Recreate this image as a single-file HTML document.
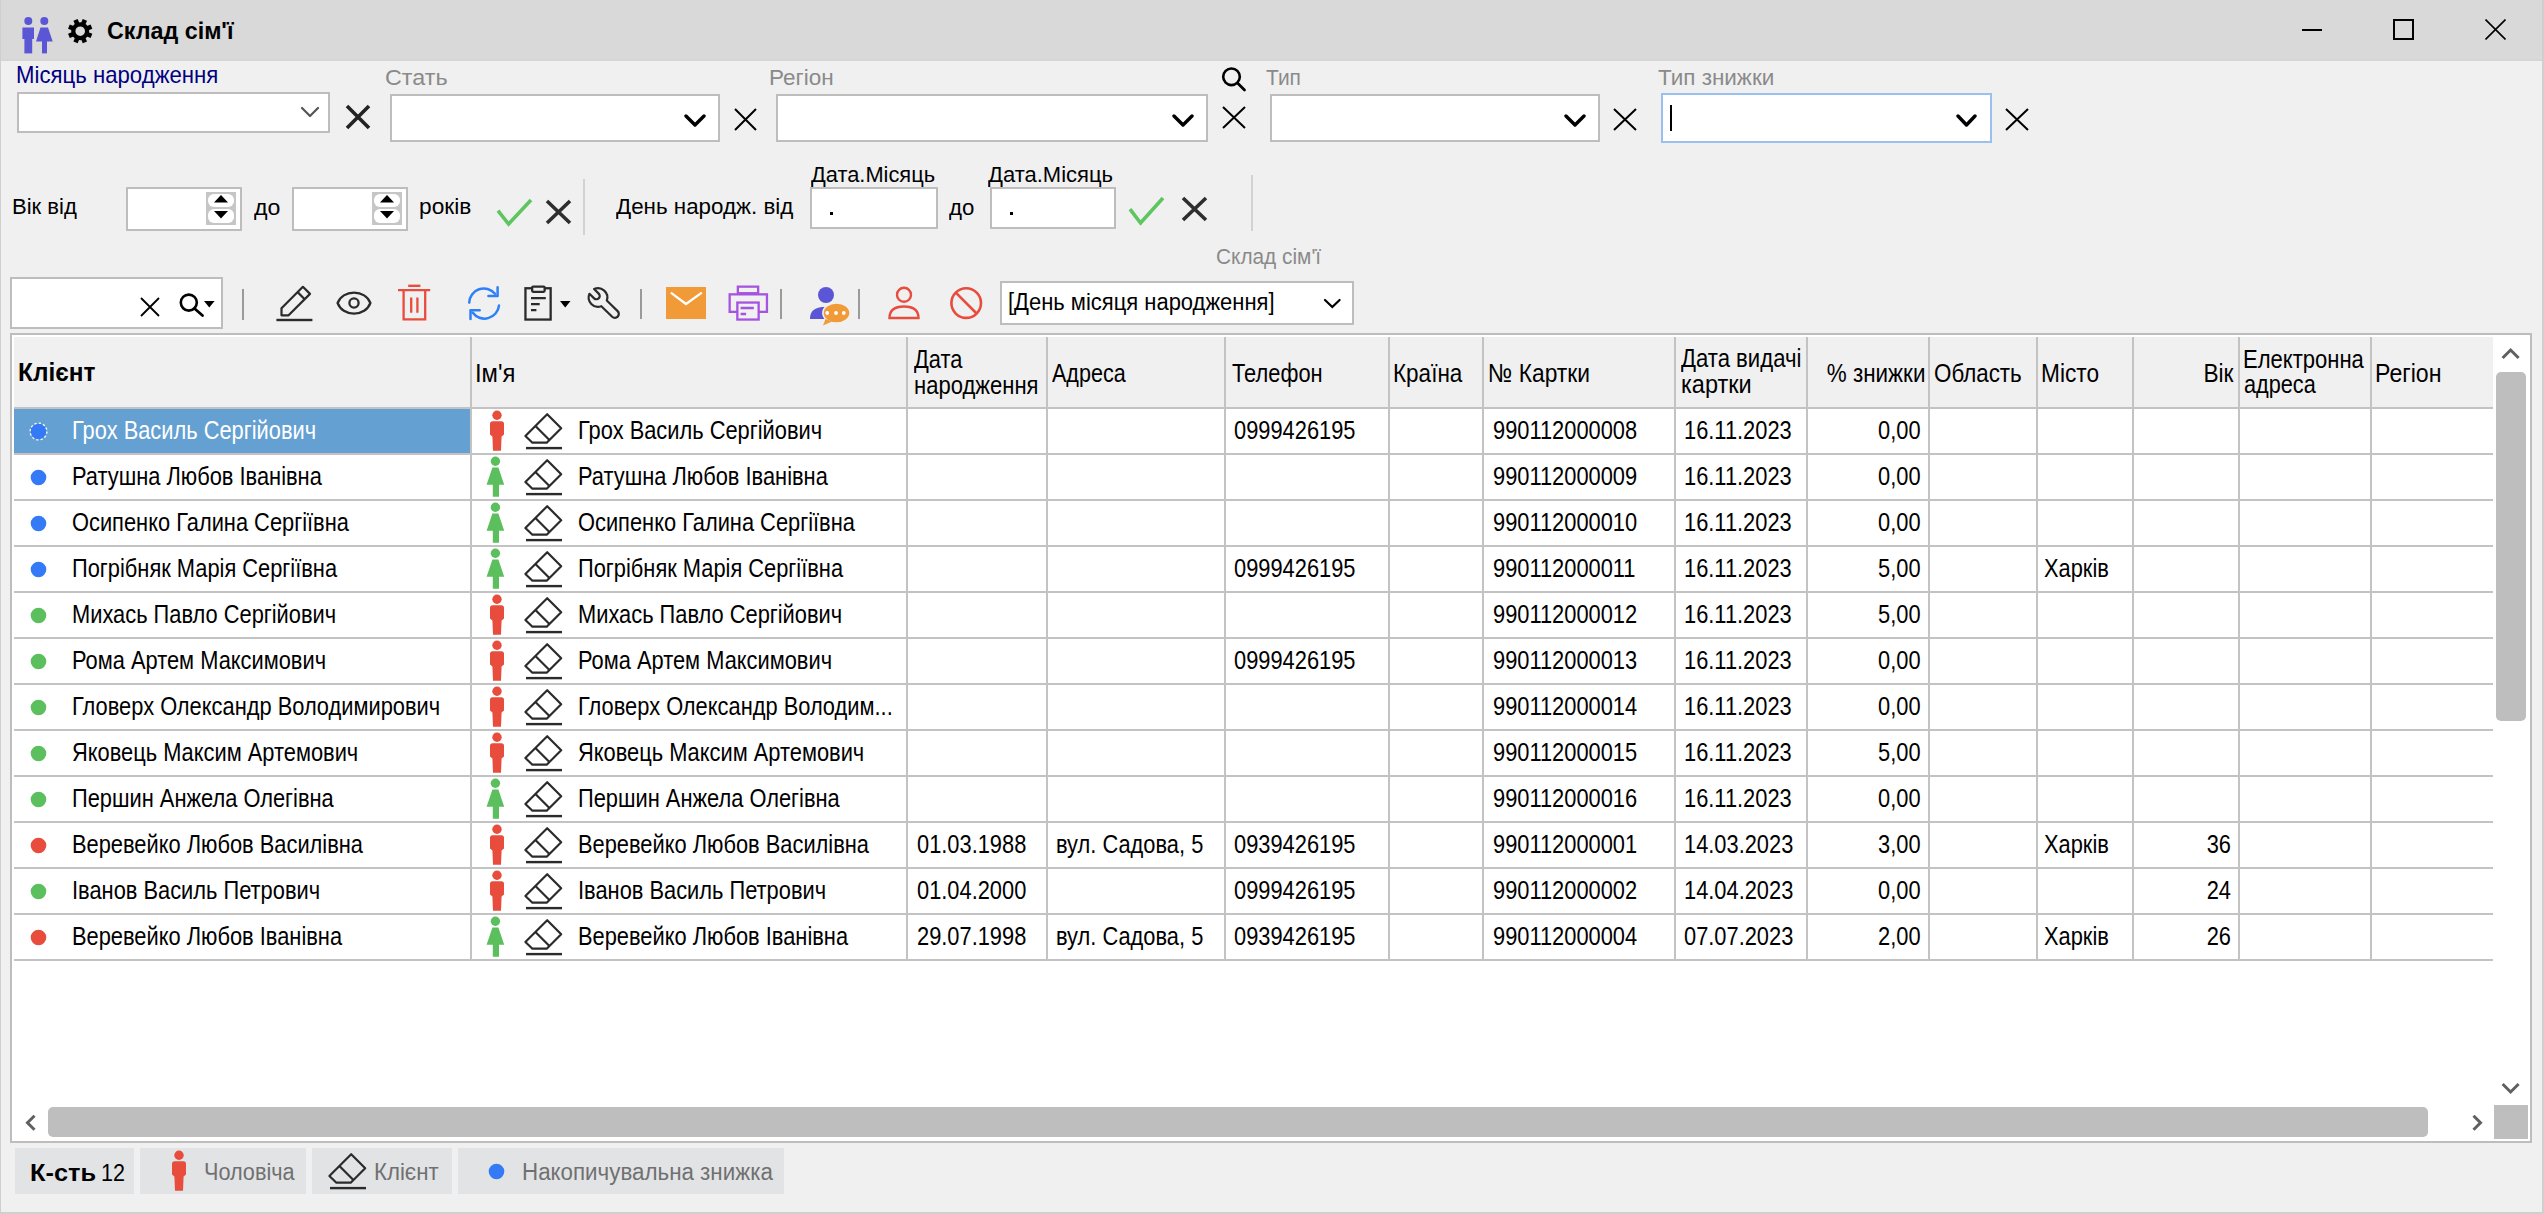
<!DOCTYPE html>
<html><head><meta charset="utf-8"><title>Склад сім'ї</title>
<style>
html,body{margin:0;padding:0;}
body{width:2544px;height:1214px;position:relative;overflow:hidden;background:#f0f0f0;font-family:"Liberation Sans",sans-serif;}
.a{position:absolute;display:block;}
.t{position:absolute;white-space:nowrap;line-height:1;transform-origin:0 0;}
</style></head><body>
<div class="a" style="left:0px;top:0px;width:2544px;height:61px;background:#d9d9d9"></div>
<div class="a" style="left:0px;top:59px;width:2544px;height:2px;background:#d5d5d5"></div>
<div class="a" style="left:0px;top:0px;width:1px;height:1214px;background:#cfcfcf"></div>
<div class="a" style="left:2542px;top:0px;width:2px;height:1214px;background:#cfcfcf"></div>
<div class="a" style="left:0px;top:1212px;width:2544px;height:2px;background:#cfcfcf"></div>
<svg class="a" style="left:20px;top:14px;" width="36" height="42" viewBox="0 0 36 42"><g fill="#5a56d6">
<circle cx="8.3" cy="7" r="4"/>
<rect x="2.4" y="13.5" width="11.6" height="11.5"/>
<rect x="4.4" y="24" width="7.8" height="15.4"/>
<circle cx="24.3" cy="7" r="4"/>
<path d="M20.5 13.5 H28 L32.7 27.5 H16 Z"/>
<rect x="22" y="26" width="5" height="13.4"/>
</g></svg>
<svg class="a" style="left:68px;top:19px;" width="25" height="25" viewBox="0 0 25 25"><g transform="translate(12.2,12.2)" fill="#000"><rect x="-2.3" y="-12.2" width="4.6" height="6" transform="rotate(22.5)"/><rect x="-2.3" y="-12.2" width="4.6" height="6" transform="rotate(67.5)"/><rect x="-2.3" y="-12.2" width="4.6" height="6" transform="rotate(112.5)"/><rect x="-2.3" y="-12.2" width="4.6" height="6" transform="rotate(157.5)"/><rect x="-2.3" y="-12.2" width="4.6" height="6" transform="rotate(202.5)"/><rect x="-2.3" y="-12.2" width="4.6" height="6" transform="rotate(247.5)"/><rect x="-2.3" y="-12.2" width="4.6" height="6" transform="rotate(292.5)"/><rect x="-2.3" y="-12.2" width="4.6" height="6" transform="rotate(337.5)"/><path d="M0 -9 A9 9 0 1 1 0 9 A9 9 0 1 1 0 -9 Z M0 -4.8 A4.8 4.8 0 1 0 0 4.8 A4.8 4.8 0 1 0 0 -4.8 Z" fill-rule="evenodd"/></g></svg>
<div id="title" class="t" style="left:107.20px;top:18.88px;font-size:24px;color:#000;font-weight:bold;transform:scaleX(0.9700)">Склад сім'ї</div>
<div class="a" style="left:2302px;top:29px;width:20px;height:2px;background:#000"></div>
<div class="a" style="left:2393px;top:19px;width:21px;height:21px;border:2px solid #000;box-sizing:border-box"></div>
<svg class="a" style="left:2485px;top:19px;" width="21" height="21" viewBox="0 0 21 21"><path d="M0.5 0.5 L20.5 20.5 M20.5 0.5 L0.5 20.5" stroke="#000" stroke-width="1.6"/></svg>
<div id="lbl_month" class="t" style="left:15.93px;top:62.78px;font-size:24px;color:#000080;transform:scaleX(0.9242)">Місяць народження</div>
<div id="lbl_sex" class="t" style="left:384.83px;top:66.98px;font-size:22px;color:#8a8a8a;transform:scaleX(1.0607)">Стать</div>
<div id="lbl_reg" class="t" style="left:769.04px;top:66.98px;font-size:22px;color:#8a8a8a;transform:scaleX(1.0234)">Регіон</div>
<div id="lbl_type" class="t" style="left:1265.82px;top:66.98px;font-size:22px;color:#8a8a8a;transform:scaleX(0.9528)">Тип</div>
<div id="lbl_dtype" class="t" style="left:1658.00px;top:66.98px;font-size:22px;color:#8a8a8a;transform:scaleX(1.0202)">Тип знижки</div>
<div class="a" style="left:17px;top:92px;width:313px;height:41px;background:#fff;border:2px solid #bdbdbd;box-sizing:border-box"></div>
<svg class="a" style="left:300px;top:106px;" width="20" height="13" viewBox="0 0 20 13"><path d="M2 2 L10 10 L18 2" fill="none" stroke="#555" stroke-width="2.2" stroke-linecap="round" stroke-linejoin="round"/></svg>
<svg class="a" style="left:345px;top:104px;" width="26" height="26" viewBox="0 0 26 26"><path d="M2 2 L24 24 M24 2 L2 24" stroke="#222" stroke-width="3.6" stroke-linecap="butt"/></svg>
<div class="a" style="left:390px;top:94px;width:330px;height:48px;background:#fff;border:2px solid #bdbdbd;box-sizing:border-box"></div>
<svg class="a" style="left:684px;top:114px;" width="22" height="14" viewBox="0 0 22 14"><path d="M2 2 L11 11 L20 2" fill="none" stroke="#000" stroke-width="3.4" stroke-linecap="round" stroke-linejoin="round"/></svg>
<svg class="a" style="left:733px;top:107px;" width="25" height="25" viewBox="0 0 25 25"><path d="M2 2 L23 23 M23 2 L2 23" stroke="#000" stroke-width="2" stroke-linecap="butt"/></svg>
<div class="a" style="left:776px;top:94px;width:432px;height:48px;background:#fff;border:2px solid #bdbdbd;box-sizing:border-box"></div>
<svg class="a" style="left:1172px;top:114px;" width="22" height="14" viewBox="0 0 22 14"><path d="M2 2 L11 11 L20 2" fill="none" stroke="#000" stroke-width="3.4" stroke-linecap="round" stroke-linejoin="round"/></svg>
<svg class="a" style="left:1220.5px;top:105px;" width="26" height="25" viewBox="0 0 26 25"><path d="M2 2 L24 23 M24 2 L2 23" stroke="#000" stroke-width="2" stroke-linecap="butt"/></svg>
<div class="a" style="left:1270px;top:94px;width:330px;height:48px;background:#fff;border:2px solid #bdbdbd;box-sizing:border-box"></div>
<svg class="a" style="left:1564px;top:114px;" width="22" height="14" viewBox="0 0 22 14"><path d="M2 2 L11 11 L20 2" fill="none" stroke="#000" stroke-width="3.4" stroke-linecap="round" stroke-linejoin="round"/></svg>
<svg class="a" style="left:1612px;top:107px;" width="26" height="25" viewBox="0 0 26 25"><path d="M2 2 L24 23 M24 2 L2 23" stroke="#000" stroke-width="2" stroke-linecap="butt"/></svg>
<div class="a" style="left:1661px;top:93px;width:331px;height:50px;background:#fff;border:2px solid #99c1ef;box-sizing:border-box"></div>
<svg class="a" style="left:1956px;top:114px;" width="21" height="14" viewBox="0 0 21 14"><path d="M2 2 L10.5 11 L19 2" fill="none" stroke="#000" stroke-width="3.4" stroke-linecap="round" stroke-linejoin="round"/></svg>
<div class="a" style="left:1670px;top:105px;width:2px;height:26px;background:#000"></div>
<svg class="a" style="left:2004px;top:107px;" width="26" height="25" viewBox="0 0 26 25"><path d="M2 2 L24 23 M24 2 L2 23" stroke="#000" stroke-width="2" stroke-linecap="butt"/></svg>
<svg class="a" style="left:1220px;top:65px;" width="28" height="28" viewBox="0 0 28 28"><circle cx="11.5" cy="11.8" r="8.3" fill="none" stroke="#000" stroke-width="2.6"/><path d="M17.5 18 L24.5 25" stroke="#000" stroke-width="2.8" stroke-linecap="round"/></svg>
<div id="lbl_age" class="t" style="left:11.52px;top:196.18px;font-size:22px;color:#000;transform:scaleX(1.0020)">Вік від</div>
<div class="a" style="left:126px;top:187px;width:116px;height:44px;background:#fff;border:2px solid #bdbdbd;box-sizing:border-box"></div>
<div class="a" style="left:206px;top:191.5px;width:30px;height:33px;background:#c6c6c6"></div>
<div class="a" style="left:208px;top:193.5px;width:26px;height:13.5px;background:#fff;border-radius:6px"></div>
<div class="a" style="left:208px;top:208.5px;width:26px;height:14px;background:#fff;border-radius:6px"></div>
<svg class="a" style="left:213px;top:194px;" width="16" height="10" viewBox="0 0 16 10"><path d="M1 8.5 L8 1 L15 8.5 Z" fill="#000"/></svg>
<svg class="a" style="left:213px;top:210px;" width="16" height="10" viewBox="0 0 16 10"><path d="M1 1 L8 8.5 L15 1 Z" fill="#000"/></svg>
<div id="lbl_do1" class="t" style="left:253.99px;top:196.78px;font-size:22px;color:#000;transform:scaleX(1.0518)">до</div>
<div class="a" style="left:292px;top:187px;width:116px;height:44px;background:#fff;border:2px solid #bdbdbd;box-sizing:border-box"></div>
<div class="a" style="left:372px;top:191.5px;width:30px;height:33px;background:#c6c6c6"></div>
<div class="a" style="left:374px;top:193.5px;width:26px;height:13.5px;background:#fff;border-radius:6px"></div>
<div class="a" style="left:374px;top:208.5px;width:26px;height:14px;background:#fff;border-radius:6px"></div>
<svg class="a" style="left:379px;top:194px;" width="16" height="10" viewBox="0 0 16 10"><path d="M1 8.5 L8 1 L15 8.5 Z" fill="#000"/></svg>
<svg class="a" style="left:379px;top:210px;" width="16" height="10" viewBox="0 0 16 10"><path d="M1 1 L8 8.5 L15 1 Z" fill="#000"/></svg>
<div id="lbl_years" class="t" style="left:419.11px;top:196.18px;font-size:22px;color:#000;transform:scaleX(1.0321)">років</div>
<svg class="a" style="left:495px;top:197px;" width="39" height="30" viewBox="0 0 39 30"><path d="M3 13.7 L13.55 27 L36 3" fill="none" stroke="#5ec65e" stroke-width="3.6" stroke-linejoin="miter"/></svg>
<svg class="a" style="left:544.5px;top:198.5px;" width="27" height="26" viewBox="0 0 27 26"><path d="M2 2 L25 24 M25 2 L2 24" stroke="#2e2e2e" stroke-width="3.6" stroke-linecap="butt"/></svg>
<div class="a" style="left:583px;top:179px;width:2px;height:56px;background:#d2d2d2"></div>
<div id="lbl_bday" class="t" style="left:615.78px;top:196.48px;font-size:22px;color:#000;transform:scaleX(1.0167)">День народж. від</div>
<div id="lbl_dm1" class="t" style="left:810.79px;top:163.98px;font-size:22px;color:#000;transform:scaleX(0.9923)">Дата.Місяць</div>
<div class="a" style="left:810px;top:187px;width:128px;height:42px;background:#fff;border:2px solid #bdbdbd;box-sizing:border-box"></div>
<div class="a" style="left:829.5px;top:212px;width:3px;height:3px;background:#000"></div>
<div id="lbl_do2" class="t" style="left:949.40px;top:197.18px;font-size:22px;color:#000;transform:scaleX(1.0111)">до</div>
<div id="lbl_dm2" class="t" style="left:988.00px;top:163.98px;font-size:22px;color:#000;transform:scaleX(1.0004)">Дата.Місяць</div>
<div class="a" style="left:990px;top:187px;width:126px;height:42px;background:#fff;border:2px solid #bdbdbd;box-sizing:border-box"></div>
<div class="a" style="left:1009.5px;top:212px;width:3px;height:3px;background:#000"></div>
<svg class="a" style="left:1127px;top:194.5px;" width="39" height="31" viewBox="0 0 39 31"><path d="M3 14.15 L13.55 28 L36 3" fill="none" stroke="#5ec65e" stroke-width="3.6" stroke-linejoin="miter"/></svg>
<svg class="a" style="left:1180.5px;top:196px;" width="27" height="26" viewBox="0 0 27 26"><path d="M2 2 L25 24 M25 2 L2 24" stroke="#2e2e2e" stroke-width="3.6" stroke-linecap="butt"/></svg>
<div class="a" style="left:1251px;top:175px;width:2px;height:56px;background:#d2d2d2"></div>
<div id="lbl_fam" class="t" style="left:1215.81px;top:246.08px;font-size:22px;color:#8a8a8a;transform:scaleX(0.9464)">Склад сім'ї</div>
<div class="a" style="left:10px;top:277px;width:213px;height:52px;background:#fff;border:2px solid #bdbdbd;box-sizing:border-box"></div>
<svg class="a" style="left:139px;top:295.5px;" width="22" height="22" viewBox="0 0 22 22"><path d="M2 2 L20 20 M20 2 L2 20" stroke="#000" stroke-width="1.8" stroke-linecap="butt"/></svg>
<svg class="a" style="left:176px;top:290px;" width="42" height="30" viewBox="0 0 42 30"><circle cx="12.8" cy="12.6" r="8" fill="none" stroke="#000" stroke-width="2.6"/><path d="M18.5 18.5 L26.5 25.5" stroke="#000" stroke-width="2.8" stroke-linecap="round"/><path d="M28 11 L38.6 11 L33.3 17.6 Z" fill="#000"/></svg>
<div class="a" style="left:242px;top:289px;width:2px;height:31px;background:#9a9a9a"></div>
<svg class="a" style="left:274px;top:284px;" width="40" height="40" viewBox="0 0 40 40"><g fill="none" stroke="#2b2b2b" stroke-width="2.2" stroke-linejoin="round">
<path d="M7.5 31.3 L7.5 24.2 L28.9 2.8 L36 9.9 L14.6 31.3 Z"/>
<path d="M23.6 8.1 L30.7 15.2"/></g>
<rect x="2.4" y="34.8" width="36" height="2.4" fill="#2b2b2b"/></svg>
<svg class="a" style="left:335px;top:290px;" width="39" height="27" viewBox="0 0 39 27"><g fill="none" stroke="#2b2b2b" stroke-width="2.3">
<path d="M2.6 13 C 5 6.5, 11.5 2.6, 19 2.6 C 26.5 2.6, 33 6.5, 35.4 13 C 33 19.5, 26.5 23.6, 19 23.6 C 11.5 23.6, 5 19.5, 2.6 13 Z"/>
<circle cx="19" cy="13" r="4.6"/></g></svg>
<svg class="a" style="left:396px;top:284px;" width="37" height="39" viewBox="0 0 37 39"><g fill="none" stroke="#e84c3d" stroke-width="2.3">
<path d="M2 6.2 H34.2"/><path d="M12.2 1.8 H24.4" stroke-width="2.4"/>
<path d="M7.6 6.2 V35.4 H29.2 V6.2"/>
<path d="M15.2 13.5 V28.8 M21.4 13.5 V28.8"/></g></svg>
<svg class="a" style="left:466px;top:285px;" width="37" height="37" viewBox="0 0 37 37"><g fill="none" stroke="#2e80f8" stroke-width="2.5" stroke-linecap="round" stroke-linejoin="round">
<path d="M3.2 17.6 A14.6 14.6 0 0 1 29 8.7"/>
<path d="M31.6 2.3 V11 H22.4"/>
<path d="M33 20.6 A14.6 14.6 0 0 1 6.6 27.5"/>
<path d="M13.7 25.3 H4.5 V34"/></g></svg>
<svg class="a" style="left:522px;top:283px;" width="52" height="40" viewBox="0 0 52 40"><g fill="none" stroke="#2b2b2b" stroke-width="2.3">
<rect x="3.45" y="5.25" width="25.2" height="31.3"/>
<rect x="10.15" y="3.65" width="12.5" height="5.2" rx="1" fill="#f0f0f0"/>
<path d="M9 15.1 H23.8 M9 21.2 H17.7 M9 27.2 H14.4"/></g>
<path d="M38 18 L48.5 18 L43.2 24.5 Z" fill="#000"/></svg>
<svg class="a" style="left:585px;top:285px;" width="38" height="37" viewBox="0 0 38 37"><path d="M 32.62 26.10 A 3.9 3.9 0 0 1 27.18 31.70 L 16.34 21.18 A 9.3 9.3 0 0 1 4.46 8.81 L 9.12 13.34 A 3.3 3.3 0 0 0 13.72 8.60 L 9.06 4.08 A 9.3 9.3 0 0 1 21.77 15.58 Z" fill="none" stroke="#2b2b2b" stroke-width="2.2" stroke-linejoin="round"/></svg>
<div class="a" style="left:640px;top:289px;width:2px;height:30px;background:#9a9a9a"></div>
<div class="a" style="left:666px;top:287px;width:40px;height:32px;background:#f09a38"></div>
<svg class="a" style="left:666px;top:287px;" width="40" height="32" viewBox="0 0 40 32"><path d="M4.8 5.6 L20 17 L35.8 5.6" fill="none" stroke="#fff" stroke-width="2.3"/></svg>
<svg class="a" style="left:727px;top:284px;" width="43" height="38" viewBox="0 0 43 38"><g fill="none" stroke="#a653e0" stroke-width="2.3">
<rect x="10.85" y="2.65" width="20.3" height="6.55"/>
<rect x="2.65" y="10.35" width="37.3" height="17.5"/>
<rect x="10.35" y="18.55" width="21.3" height="17" fill="#f0f0f0"/>
<path d="M13.6 24 H26.8 M13.6 30 H19.1"/></g></svg>
<div class="a" style="left:780px;top:289px;width:2px;height:30px;background:#9a9a9a"></div>
<svg class="a" style="left:808px;top:286px;" width="44" height="41" viewBox="0 0 44 41"><circle cx="18" cy="9" r="8" fill="#5a56d6"/>
<path d="M2 33 C2 25 6 22 14 21 L24 21 L24 33 Z" fill="#5a56d6"/>
<ellipse cx="28.5" cy="27" rx="13.6" ry="10" fill="#f09a38" stroke="#f0f0f0" stroke-width="1.6"/>
<path d="M17.5 33 L15 39.5 L24 35.5 Z" fill="#f09a38"/>
<circle cx="19.2" cy="27" r="1.9" fill="#fff"/><circle cx="28" cy="27" r="1.9" fill="#fff"/><circle cx="35.8" cy="27" r="1.9" fill="#fff"/></svg>
<div class="a" style="left:858px;top:289px;width:2px;height:30px;background:#9a9a9a"></div>
<svg class="a" style="left:886px;top:285px;" width="37" height="37" viewBox="0 0 37 37"><g fill="none" stroke="#e84c3d" stroke-width="2.4">
<circle cx="18" cy="9.8" r="7"/>
<path d="M3.5 33 C3.5 25 8.5 21.5 18 21.5 C27.5 21.5 32.5 25 32.5 33 Z"/></g></svg>
<svg class="a" style="left:948px;top:285px;" width="37" height="37" viewBox="0 0 37 37"><g fill="none" stroke="#e84c3d" stroke-width="2.6">
<circle cx="18.2" cy="18.1" r="14.8"/><path d="M7.8 7.7 L28.6 28.5"/></g></svg>
<div class="a" style="left:1000px;top:281px;width:354px;height:44px;background:#fff;border:2px solid #bdbdbd;box-sizing:border-box"></div>
<div id="cmb_txt" class="t" style="left:1008.00px;top:291.33px;font-size:23px;color:#000;transform:scaleX(0.9550)">[День місяця народження]</div>
<svg class="a" style="left:1323px;top:298px;" width="19" height="12" viewBox="0 0 19 12"><path d="M2 2 L9.3 9 L16.6 2" fill="none" stroke="#000" stroke-width="2.2" stroke-linecap="round"/></svg>
<div class="a" style="left:10px;top:333px;width:2522px;height:810px;background:#fff;border:2px solid #bdbdbd;box-sizing:border-box"></div>
<div class="a" style="left:14px;top:337px;width:2479px;height:70px;background:#f0f0f0"></div>
<div class="a" style="left:470px;top:337px;width:2px;height:624px;background:#c3c3c3"></div>
<div class="a" style="left:906px;top:337px;width:2px;height:624px;background:#c3c3c3"></div>
<div class="a" style="left:1046px;top:337px;width:2px;height:624px;background:#c3c3c3"></div>
<div class="a" style="left:1224px;top:337px;width:2px;height:624px;background:#c3c3c3"></div>
<div class="a" style="left:1388px;top:337px;width:2px;height:624px;background:#c3c3c3"></div>
<div class="a" style="left:1482px;top:337px;width:2px;height:624px;background:#c3c3c3"></div>
<div class="a" style="left:1674px;top:337px;width:2px;height:624px;background:#c3c3c3"></div>
<div class="a" style="left:1806px;top:337px;width:2px;height:624px;background:#c3c3c3"></div>
<div class="a" style="left:1928px;top:337px;width:2px;height:624px;background:#c3c3c3"></div>
<div class="a" style="left:2036px;top:337px;width:2px;height:624px;background:#c3c3c3"></div>
<div class="a" style="left:2132px;top:337px;width:2px;height:624px;background:#c3c3c3"></div>
<div class="a" style="left:2238px;top:337px;width:2px;height:624px;background:#c3c3c3"></div>
<div class="a" style="left:2370px;top:337px;width:2px;height:624px;background:#c3c3c3"></div>
<div class="a" style="left:14px;top:407px;width:2479px;height:2px;background:#c3c3c3"></div>
<div class="a" style="left:14px;top:453px;width:2479px;height:2px;background:#c3c3c3"></div>
<div class="a" style="left:14px;top:499px;width:2479px;height:2px;background:#c3c3c3"></div>
<div class="a" style="left:14px;top:545px;width:2479px;height:2px;background:#c3c3c3"></div>
<div class="a" style="left:14px;top:591px;width:2479px;height:2px;background:#c3c3c3"></div>
<div class="a" style="left:14px;top:637px;width:2479px;height:2px;background:#c3c3c3"></div>
<div class="a" style="left:14px;top:683px;width:2479px;height:2px;background:#c3c3c3"></div>
<div class="a" style="left:14px;top:729px;width:2479px;height:2px;background:#c3c3c3"></div>
<div class="a" style="left:14px;top:775px;width:2479px;height:2px;background:#c3c3c3"></div>
<div class="a" style="left:14px;top:821px;width:2479px;height:2px;background:#c3c3c3"></div>
<div class="a" style="left:14px;top:867px;width:2479px;height:2px;background:#c3c3c3"></div>
<div class="a" style="left:14px;top:913px;width:2479px;height:2px;background:#c3c3c3"></div>
<div class="a" style="left:14px;top:959px;width:2479px;height:2px;background:#c3c3c3"></div>
<div class="a" style="left:14px;top:409px;width:456px;height:44px;background:#64a0d2"></div>
<div id="h_client" class="t" style="left:17.56px;top:360.34px;font-size:25px;color:#000;font-weight:bold;transform:scaleX(0.9761)">Клієнт</div>
<div id="h_name" class="t" style="left:475.25px;top:359.99px;font-size:26px;color:#000;transform:scaleX(0.9144)">Ім'я</div>
<div id="h_bd1" class="t" style="left:914.00px;top:345.99px;font-size:26px;color:#000;transform:scaleX(0.8400)">Дата</div>
<div id="h_bd2" class="t" style="left:914.00px;top:371.69px;font-size:26px;color:#000;transform:scaleX(0.8469)">народження</div>
<div id="h_addr" class="t" style="left:1052.00px;top:359.99px;font-size:26px;color:#000;transform:scaleX(0.8289)">Адреса</div>
<div id="h_tel" class="t" style="left:1231.60px;top:359.99px;font-size:26px;color:#000;transform:scaleX(0.8401)">Телефон</div>
<div id="h_country" class="t" style="left:1393.35px;top:359.99px;font-size:26px;color:#000;transform:scaleX(0.8655)">Країна</div>
<div id="h_card" class="t" style="left:1487.89px;top:359.99px;font-size:26px;color:#000;transform:scaleX(0.8758)">№ Картки</div>
<div id="h_iss1" class="t" style="left:1681.20px;top:345.49px;font-size:26px;color:#000;transform:scaleX(0.8507)">Дата видачі</div>
<div id="h_iss2" class="t" style="left:1681.17px;top:371.29px;font-size:26px;color:#000;transform:scaleX(0.9057)">картки</div>
<div id="h_disc" class="t" style="right:618.17px;top:359.99px;font-size:26px;color:#000;transform:scaleX(0.8623);transform-origin:100% 0">% знижки</div>
<div id="h_obl" class="t" style="left:1933.98px;top:359.99px;font-size:26px;color:#000;transform:scaleX(0.8601)">Область</div>
<div id="h_city" class="t" style="left:2041.14px;top:359.99px;font-size:26px;color:#000;transform:scaleX(0.8718)">Місто</div>
<div id="h_age" class="t" style="right:310.74px;top:359.99px;font-size:26px;color:#000;transform:scaleX(0.8721);transform-origin:100% 0">Вік</div>
<div id="h_em1" class="t" style="left:2242.98px;top:345.69px;font-size:26px;color:#000;transform:scaleX(0.8472)">Електронна</div>
<div id="h_em2" class="t" style="left:2244.01px;top:370.99px;font-size:26px;color:#000;transform:scaleX(0.8342)">адреса</div>
<div id="h_reg" class="t" style="left:2375.09px;top:359.99px;font-size:26px;color:#000;transform:scaleX(0.8891)">Регіон</div>
<svg class="a" style="left:28px;top:421px;" width="21" height="21" viewBox="0 0 21 21"><circle cx="10.5" cy="10.5" r="7.8" fill="#3479f6"/><circle cx="10.5" cy="10.5" r="8.4" fill="none" stroke="#fff" stroke-width="1.3" stroke-dasharray="2.2 2.2"/></svg>
<div id="r0_c0" class="t" style="left:71.80px;top:416.99px;font-size:26px;color:#fff;transform:scaleX(0.8400)">Грох Василь Сергійович</div>
<svg class="a" style="left:489px;top:410px;" width="16" height="42" viewBox="0 0 16 42"><circle cx="8" cy="5.3" r="4.7" fill="#e84c3d"/>
<path d="M1 13.8 Q1 11.2 3.6 11.2 H12.4 Q15 11.2 15 13.8 V24.5 L12.6 26.5 L12 40.8 H4 L3.4 26.5 L1 24.5 Z" fill="#e84c3d"/></svg>
<svg class="a" style="left:523px;top:411px;" width="41" height="42" viewBox="0 0 41 42"><g fill="none" stroke="#2b2b2b" stroke-width="2.2" stroke-linejoin="round">
<path d="M2.4 25 L24.2 3.2 L38.2 17.2 L23.7 31.7 H9.4 Z"/>
<path d="M12.4 15 L26.4 29"/></g>
<rect x="3" y="35.9" width="36" height="2.4" fill="#2b2b2b"/></svg>
<div id="r0_c1" class="t" style="left:578.00px;top:416.99px;font-size:26px;color:#000;transform:scaleX(0.8400)">Грох Василь Сергійович</div>
<div id="r0_tel" class="t" style="left:1234.00px;top:416.99px;font-size:26px;color:#000;transform:scaleX(0.8400)">0999426195</div>
<div id="r0_card" class="t" style="left:1492.50px;top:416.99px;font-size:26px;color:#000;transform:scaleX(0.8400)">990112000008</div>
<div id="r0_iss" class="t" style="left:1684.00px;top:416.99px;font-size:26px;color:#000;transform:scaleX(0.8400)">16.11.2023</div>
<div id="r0_disc" class="t" style="right:623.00px;top:416.99px;font-size:26px;color:#000;transform:scaleX(0.8400);transform-origin:100% 0">0,00</div>
<svg class="a" style="left:28px;top:467px;" width="21" height="21" viewBox="0 0 21 21"><circle cx="10.5" cy="10.5" r="7.8" fill="#3479f6"/></svg>
<div id="r1_c0" class="t" style="left:71.80px;top:462.99px;font-size:26px;color:#000;transform:scaleX(0.8400)">Ратушна Любов Іванівна</div>
<svg class="a" style="left:486px;top:456px;" width="19" height="42" viewBox="0 0 19 42"><circle cx="9.4" cy="5.3" r="4.7" fill="#5cbf5e"/>
<path d="M6.4 11.6 H12.4 L18.2 28.8 H13 V40.8 H6.8 V28.8 H0.6 Z" fill="#5cbf5e"/></svg>
<svg class="a" style="left:523px;top:457px;" width="41" height="42" viewBox="0 0 41 42"><g fill="none" stroke="#2b2b2b" stroke-width="2.2" stroke-linejoin="round">
<path d="M2.4 25 L24.2 3.2 L38.2 17.2 L23.7 31.7 H9.4 Z"/>
<path d="M12.4 15 L26.4 29"/></g>
<rect x="3" y="35.9" width="36" height="2.4" fill="#2b2b2b"/></svg>
<div id="r1_c1" class="t" style="left:578.00px;top:462.99px;font-size:26px;color:#000;transform:scaleX(0.8400)">Ратушна Любов Іванівна</div>
<div id="r1_card" class="t" style="left:1492.50px;top:462.99px;font-size:26px;color:#000;transform:scaleX(0.8400)">990112000009</div>
<div id="r1_iss" class="t" style="left:1684.00px;top:462.99px;font-size:26px;color:#000;transform:scaleX(0.8400)">16.11.2023</div>
<div id="r1_disc" class="t" style="right:623.00px;top:462.99px;font-size:26px;color:#000;transform:scaleX(0.8400);transform-origin:100% 0">0,00</div>
<svg class="a" style="left:28px;top:513px;" width="21" height="21" viewBox="0 0 21 21"><circle cx="10.5" cy="10.5" r="7.8" fill="#3479f6"/></svg>
<div id="r2_c0" class="t" style="left:71.80px;top:508.99px;font-size:26px;color:#000;transform:scaleX(0.8400)">Осипенко Галина Сергіївна</div>
<svg class="a" style="left:486px;top:502px;" width="19" height="42" viewBox="0 0 19 42"><circle cx="9.4" cy="5.3" r="4.7" fill="#5cbf5e"/>
<path d="M6.4 11.6 H12.4 L18.2 28.8 H13 V40.8 H6.8 V28.8 H0.6 Z" fill="#5cbf5e"/></svg>
<svg class="a" style="left:523px;top:503px;" width="41" height="42" viewBox="0 0 41 42"><g fill="none" stroke="#2b2b2b" stroke-width="2.2" stroke-linejoin="round">
<path d="M2.4 25 L24.2 3.2 L38.2 17.2 L23.7 31.7 H9.4 Z"/>
<path d="M12.4 15 L26.4 29"/></g>
<rect x="3" y="35.9" width="36" height="2.4" fill="#2b2b2b"/></svg>
<div id="r2_c1" class="t" style="left:578.00px;top:508.99px;font-size:26px;color:#000;transform:scaleX(0.8400)">Осипенко Галина Сергіївна</div>
<div id="r2_card" class="t" style="left:1492.50px;top:508.99px;font-size:26px;color:#000;transform:scaleX(0.8400)">990112000010</div>
<div id="r2_iss" class="t" style="left:1684.00px;top:508.99px;font-size:26px;color:#000;transform:scaleX(0.8400)">16.11.2023</div>
<div id="r2_disc" class="t" style="right:623.00px;top:508.99px;font-size:26px;color:#000;transform:scaleX(0.8400);transform-origin:100% 0">0,00</div>
<svg class="a" style="left:28px;top:559px;" width="21" height="21" viewBox="0 0 21 21"><circle cx="10.5" cy="10.5" r="7.8" fill="#3479f6"/></svg>
<div id="r3_c0" class="t" style="left:71.80px;top:554.99px;font-size:26px;color:#000;transform:scaleX(0.8400)">Погрібняк Марія Сергіївна</div>
<svg class="a" style="left:486px;top:548px;" width="19" height="42" viewBox="0 0 19 42"><circle cx="9.4" cy="5.3" r="4.7" fill="#5cbf5e"/>
<path d="M6.4 11.6 H12.4 L18.2 28.8 H13 V40.8 H6.8 V28.8 H0.6 Z" fill="#5cbf5e"/></svg>
<svg class="a" style="left:523px;top:549px;" width="41" height="42" viewBox="0 0 41 42"><g fill="none" stroke="#2b2b2b" stroke-width="2.2" stroke-linejoin="round">
<path d="M2.4 25 L24.2 3.2 L38.2 17.2 L23.7 31.7 H9.4 Z"/>
<path d="M12.4 15 L26.4 29"/></g>
<rect x="3" y="35.9" width="36" height="2.4" fill="#2b2b2b"/></svg>
<div id="r3_c1" class="t" style="left:578.00px;top:554.99px;font-size:26px;color:#000;transform:scaleX(0.8400)">Погрібняк Марія Сергіївна</div>
<div id="r3_tel" class="t" style="left:1234.00px;top:554.99px;font-size:26px;color:#000;transform:scaleX(0.8400)">0999426195</div>
<div id="r3_card" class="t" style="left:1492.50px;top:554.99px;font-size:26px;color:#000;transform:scaleX(0.8400)">990112000011</div>
<div id="r3_iss" class="t" style="left:1684.00px;top:554.99px;font-size:26px;color:#000;transform:scaleX(0.8400)">16.11.2023</div>
<div id="r3_disc" class="t" style="right:623.00px;top:554.99px;font-size:26px;color:#000;transform:scaleX(0.8400);transform-origin:100% 0">5,00</div>
<div id="r3_city" class="t" style="left:2044.00px;top:554.99px;font-size:26px;color:#000;transform:scaleX(0.8400)">Харків</div>
<svg class="a" style="left:28px;top:605px;" width="21" height="21" viewBox="0 0 21 21"><circle cx="10.5" cy="10.5" r="7.8" fill="#5cbf5e"/></svg>
<div id="r4_c0" class="t" style="left:71.80px;top:600.99px;font-size:26px;color:#000;transform:scaleX(0.8400)">Михась Павло Сергійович</div>
<svg class="a" style="left:489px;top:594px;" width="16" height="42" viewBox="0 0 16 42"><circle cx="8" cy="5.3" r="4.7" fill="#e84c3d"/>
<path d="M1 13.8 Q1 11.2 3.6 11.2 H12.4 Q15 11.2 15 13.8 V24.5 L12.6 26.5 L12 40.8 H4 L3.4 26.5 L1 24.5 Z" fill="#e84c3d"/></svg>
<svg class="a" style="left:523px;top:595px;" width="41" height="42" viewBox="0 0 41 42"><g fill="none" stroke="#2b2b2b" stroke-width="2.2" stroke-linejoin="round">
<path d="M2.4 25 L24.2 3.2 L38.2 17.2 L23.7 31.7 H9.4 Z"/>
<path d="M12.4 15 L26.4 29"/></g>
<rect x="3" y="35.9" width="36" height="2.4" fill="#2b2b2b"/></svg>
<div id="r4_c1" class="t" style="left:578.00px;top:600.99px;font-size:26px;color:#000;transform:scaleX(0.8400)">Михась Павло Сергійович</div>
<div id="r4_card" class="t" style="left:1492.50px;top:600.99px;font-size:26px;color:#000;transform:scaleX(0.8400)">990112000012</div>
<div id="r4_iss" class="t" style="left:1684.00px;top:600.99px;font-size:26px;color:#000;transform:scaleX(0.8400)">16.11.2023</div>
<div id="r4_disc" class="t" style="right:623.00px;top:600.99px;font-size:26px;color:#000;transform:scaleX(0.8400);transform-origin:100% 0">5,00</div>
<svg class="a" style="left:28px;top:651px;" width="21" height="21" viewBox="0 0 21 21"><circle cx="10.5" cy="10.5" r="7.8" fill="#5cbf5e"/></svg>
<div id="r5_c0" class="t" style="left:71.80px;top:646.99px;font-size:26px;color:#000;transform:scaleX(0.8400)">Рома Артем Максимович</div>
<svg class="a" style="left:489px;top:640px;" width="16" height="42" viewBox="0 0 16 42"><circle cx="8" cy="5.3" r="4.7" fill="#e84c3d"/>
<path d="M1 13.8 Q1 11.2 3.6 11.2 H12.4 Q15 11.2 15 13.8 V24.5 L12.6 26.5 L12 40.8 H4 L3.4 26.5 L1 24.5 Z" fill="#e84c3d"/></svg>
<svg class="a" style="left:523px;top:641px;" width="41" height="42" viewBox="0 0 41 42"><g fill="none" stroke="#2b2b2b" stroke-width="2.2" stroke-linejoin="round">
<path d="M2.4 25 L24.2 3.2 L38.2 17.2 L23.7 31.7 H9.4 Z"/>
<path d="M12.4 15 L26.4 29"/></g>
<rect x="3" y="35.9" width="36" height="2.4" fill="#2b2b2b"/></svg>
<div id="r5_c1" class="t" style="left:578.00px;top:646.99px;font-size:26px;color:#000;transform:scaleX(0.8400)">Рома Артем Максимович</div>
<div id="r5_tel" class="t" style="left:1234.00px;top:646.99px;font-size:26px;color:#000;transform:scaleX(0.8400)">0999426195</div>
<div id="r5_card" class="t" style="left:1492.50px;top:646.99px;font-size:26px;color:#000;transform:scaleX(0.8400)">990112000013</div>
<div id="r5_iss" class="t" style="left:1684.00px;top:646.99px;font-size:26px;color:#000;transform:scaleX(0.8400)">16.11.2023</div>
<div id="r5_disc" class="t" style="right:623.00px;top:646.99px;font-size:26px;color:#000;transform:scaleX(0.8400);transform-origin:100% 0">0,00</div>
<svg class="a" style="left:28px;top:697px;" width="21" height="21" viewBox="0 0 21 21"><circle cx="10.5" cy="10.5" r="7.8" fill="#5cbf5e"/></svg>
<div id="r6_c0" class="t" style="left:71.80px;top:692.99px;font-size:26px;color:#000;transform:scaleX(0.8400)">Гловерх Олександр Володимирович</div>
<svg class="a" style="left:489px;top:686px;" width="16" height="42" viewBox="0 0 16 42"><circle cx="8" cy="5.3" r="4.7" fill="#e84c3d"/>
<path d="M1 13.8 Q1 11.2 3.6 11.2 H12.4 Q15 11.2 15 13.8 V24.5 L12.6 26.5 L12 40.8 H4 L3.4 26.5 L1 24.5 Z" fill="#e84c3d"/></svg>
<svg class="a" style="left:523px;top:687px;" width="41" height="42" viewBox="0 0 41 42"><g fill="none" stroke="#2b2b2b" stroke-width="2.2" stroke-linejoin="round">
<path d="M2.4 25 L24.2 3.2 L38.2 17.2 L23.7 31.7 H9.4 Z"/>
<path d="M12.4 15 L26.4 29"/></g>
<rect x="3" y="35.9" width="36" height="2.4" fill="#2b2b2b"/></svg>
<div id="r6_c1" class="t" style="left:578.00px;top:692.99px;font-size:26px;color:#000;transform:scaleX(0.8400)">Гловерх Олександр Володим...</div>
<div id="r6_card" class="t" style="left:1492.50px;top:692.99px;font-size:26px;color:#000;transform:scaleX(0.8400)">990112000014</div>
<div id="r6_iss" class="t" style="left:1684.00px;top:692.99px;font-size:26px;color:#000;transform:scaleX(0.8400)">16.11.2023</div>
<div id="r6_disc" class="t" style="right:623.00px;top:692.99px;font-size:26px;color:#000;transform:scaleX(0.8400);transform-origin:100% 0">0,00</div>
<svg class="a" style="left:28px;top:743px;" width="21" height="21" viewBox="0 0 21 21"><circle cx="10.5" cy="10.5" r="7.8" fill="#5cbf5e"/></svg>
<div id="r7_c0" class="t" style="left:71.80px;top:738.99px;font-size:26px;color:#000;transform:scaleX(0.8400)">Яковець Максим Артемович</div>
<svg class="a" style="left:489px;top:732px;" width="16" height="42" viewBox="0 0 16 42"><circle cx="8" cy="5.3" r="4.7" fill="#e84c3d"/>
<path d="M1 13.8 Q1 11.2 3.6 11.2 H12.4 Q15 11.2 15 13.8 V24.5 L12.6 26.5 L12 40.8 H4 L3.4 26.5 L1 24.5 Z" fill="#e84c3d"/></svg>
<svg class="a" style="left:523px;top:733px;" width="41" height="42" viewBox="0 0 41 42"><g fill="none" stroke="#2b2b2b" stroke-width="2.2" stroke-linejoin="round">
<path d="M2.4 25 L24.2 3.2 L38.2 17.2 L23.7 31.7 H9.4 Z"/>
<path d="M12.4 15 L26.4 29"/></g>
<rect x="3" y="35.9" width="36" height="2.4" fill="#2b2b2b"/></svg>
<div id="r7_c1" class="t" style="left:578.00px;top:738.99px;font-size:26px;color:#000;transform:scaleX(0.8400)">Яковець Максим Артемович</div>
<div id="r7_card" class="t" style="left:1492.50px;top:738.99px;font-size:26px;color:#000;transform:scaleX(0.8400)">990112000015</div>
<div id="r7_iss" class="t" style="left:1684.00px;top:738.99px;font-size:26px;color:#000;transform:scaleX(0.8400)">16.11.2023</div>
<div id="r7_disc" class="t" style="right:623.00px;top:738.99px;font-size:26px;color:#000;transform:scaleX(0.8400);transform-origin:100% 0">5,00</div>
<svg class="a" style="left:28px;top:789px;" width="21" height="21" viewBox="0 0 21 21"><circle cx="10.5" cy="10.5" r="7.8" fill="#5cbf5e"/></svg>
<div id="r8_c0" class="t" style="left:71.80px;top:784.99px;font-size:26px;color:#000;transform:scaleX(0.8400)">Першин Анжела Олегівна</div>
<svg class="a" style="left:486px;top:778px;" width="19" height="42" viewBox="0 0 19 42"><circle cx="9.4" cy="5.3" r="4.7" fill="#5cbf5e"/>
<path d="M6.4 11.6 H12.4 L18.2 28.8 H13 V40.8 H6.8 V28.8 H0.6 Z" fill="#5cbf5e"/></svg>
<svg class="a" style="left:523px;top:779px;" width="41" height="42" viewBox="0 0 41 42"><g fill="none" stroke="#2b2b2b" stroke-width="2.2" stroke-linejoin="round">
<path d="M2.4 25 L24.2 3.2 L38.2 17.2 L23.7 31.7 H9.4 Z"/>
<path d="M12.4 15 L26.4 29"/></g>
<rect x="3" y="35.9" width="36" height="2.4" fill="#2b2b2b"/></svg>
<div id="r8_c1" class="t" style="left:578.00px;top:784.99px;font-size:26px;color:#000;transform:scaleX(0.8400)">Першин Анжела Олегівна</div>
<div id="r8_card" class="t" style="left:1492.50px;top:784.99px;font-size:26px;color:#000;transform:scaleX(0.8400)">990112000016</div>
<div id="r8_iss" class="t" style="left:1684.00px;top:784.99px;font-size:26px;color:#000;transform:scaleX(0.8400)">16.11.2023</div>
<div id="r8_disc" class="t" style="right:623.00px;top:784.99px;font-size:26px;color:#000;transform:scaleX(0.8400);transform-origin:100% 0">0,00</div>
<svg class="a" style="left:28px;top:835px;" width="21" height="21" viewBox="0 0 21 21"><circle cx="10.5" cy="10.5" r="7.8" fill="#e84c3d"/></svg>
<div id="r9_c0" class="t" style="left:71.80px;top:830.99px;font-size:26px;color:#000;transform:scaleX(0.8400)">Веревейко Любов Василівна</div>
<svg class="a" style="left:489px;top:824px;" width="16" height="42" viewBox="0 0 16 42"><circle cx="8" cy="5.3" r="4.7" fill="#e84c3d"/>
<path d="M1 13.8 Q1 11.2 3.6 11.2 H12.4 Q15 11.2 15 13.8 V24.5 L12.6 26.5 L12 40.8 H4 L3.4 26.5 L1 24.5 Z" fill="#e84c3d"/></svg>
<svg class="a" style="left:523px;top:825px;" width="41" height="42" viewBox="0 0 41 42"><g fill="none" stroke="#2b2b2b" stroke-width="2.2" stroke-linejoin="round">
<path d="M2.4 25 L24.2 3.2 L38.2 17.2 L23.7 31.7 H9.4 Z"/>
<path d="M12.4 15 L26.4 29"/></g>
<rect x="3" y="35.9" width="36" height="2.4" fill="#2b2b2b"/></svg>
<div id="r9_c1" class="t" style="left:578.00px;top:830.99px;font-size:26px;color:#000;transform:scaleX(0.8400)">Веревейко Любов Василівна</div>
<div id="r9_bd" class="t" style="left:916.50px;top:830.99px;font-size:26px;color:#000;transform:scaleX(0.8400)">01.03.1988</div>
<div id="r9_addr" class="t" style="left:1056.20px;top:830.99px;font-size:26px;color:#000;transform:scaleX(0.8400)">вул. Садова, 5</div>
<div id="r9_tel" class="t" style="left:1234.00px;top:830.99px;font-size:26px;color:#000;transform:scaleX(0.8400)">0939426195</div>
<div id="r9_card" class="t" style="left:1492.50px;top:830.99px;font-size:26px;color:#000;transform:scaleX(0.8400)">990112000001</div>
<div id="r9_iss" class="t" style="left:1684.00px;top:830.99px;font-size:26px;color:#000;transform:scaleX(0.8400)">14.03.2023</div>
<div id="r9_disc" class="t" style="right:623.00px;top:830.99px;font-size:26px;color:#000;transform:scaleX(0.8400);transform-origin:100% 0">3,00</div>
<div id="r9_city" class="t" style="left:2044.00px;top:830.99px;font-size:26px;color:#000;transform:scaleX(0.8400)">Харків</div>
<div id="r9_age" class="t" style="right:313.00px;top:830.99px;font-size:26px;color:#000;transform:scaleX(0.8400);transform-origin:100% 0">36</div>
<svg class="a" style="left:28px;top:881px;" width="21" height="21" viewBox="0 0 21 21"><circle cx="10.5" cy="10.5" r="7.8" fill="#5cbf5e"/></svg>
<div id="r10_c0" class="t" style="left:71.80px;top:876.99px;font-size:26px;color:#000;transform:scaleX(0.8400)">Іванов Василь Петрович</div>
<svg class="a" style="left:489px;top:870px;" width="16" height="42" viewBox="0 0 16 42"><circle cx="8" cy="5.3" r="4.7" fill="#e84c3d"/>
<path d="M1 13.8 Q1 11.2 3.6 11.2 H12.4 Q15 11.2 15 13.8 V24.5 L12.6 26.5 L12 40.8 H4 L3.4 26.5 L1 24.5 Z" fill="#e84c3d"/></svg>
<svg class="a" style="left:523px;top:871px;" width="41" height="42" viewBox="0 0 41 42"><g fill="none" stroke="#2b2b2b" stroke-width="2.2" stroke-linejoin="round">
<path d="M2.4 25 L24.2 3.2 L38.2 17.2 L23.7 31.7 H9.4 Z"/>
<path d="M12.4 15 L26.4 29"/></g>
<rect x="3" y="35.9" width="36" height="2.4" fill="#2b2b2b"/></svg>
<div id="r10_c1" class="t" style="left:578.00px;top:876.99px;font-size:26px;color:#000;transform:scaleX(0.8400)">Іванов Василь Петрович</div>
<div id="r10_bd" class="t" style="left:916.50px;top:876.99px;font-size:26px;color:#000;transform:scaleX(0.8400)">01.04.2000</div>
<div id="r10_tel" class="t" style="left:1234.00px;top:876.99px;font-size:26px;color:#000;transform:scaleX(0.8400)">0999426195</div>
<div id="r10_card" class="t" style="left:1492.50px;top:876.99px;font-size:26px;color:#000;transform:scaleX(0.8400)">990112000002</div>
<div id="r10_iss" class="t" style="left:1684.00px;top:876.99px;font-size:26px;color:#000;transform:scaleX(0.8400)">14.04.2023</div>
<div id="r10_disc" class="t" style="right:623.00px;top:876.99px;font-size:26px;color:#000;transform:scaleX(0.8400);transform-origin:100% 0">0,00</div>
<div id="r10_age" class="t" style="right:313.00px;top:876.99px;font-size:26px;color:#000;transform:scaleX(0.8400);transform-origin:100% 0">24</div>
<svg class="a" style="left:28px;top:927px;" width="21" height="21" viewBox="0 0 21 21"><circle cx="10.5" cy="10.5" r="7.8" fill="#e84c3d"/></svg>
<div id="r11_c0" class="t" style="left:71.80px;top:922.99px;font-size:26px;color:#000;transform:scaleX(0.8400)">Веревейко Любов Іванівна</div>
<svg class="a" style="left:486px;top:916px;" width="19" height="42" viewBox="0 0 19 42"><circle cx="9.4" cy="5.3" r="4.7" fill="#5cbf5e"/>
<path d="M6.4 11.6 H12.4 L18.2 28.8 H13 V40.8 H6.8 V28.8 H0.6 Z" fill="#5cbf5e"/></svg>
<svg class="a" style="left:523px;top:917px;" width="41" height="42" viewBox="0 0 41 42"><g fill="none" stroke="#2b2b2b" stroke-width="2.2" stroke-linejoin="round">
<path d="M2.4 25 L24.2 3.2 L38.2 17.2 L23.7 31.7 H9.4 Z"/>
<path d="M12.4 15 L26.4 29"/></g>
<rect x="3" y="35.9" width="36" height="2.4" fill="#2b2b2b"/></svg>
<div id="r11_c1" class="t" style="left:578.00px;top:922.99px;font-size:26px;color:#000;transform:scaleX(0.8400)">Веревейко Любов Іванівна</div>
<div id="r11_bd" class="t" style="left:916.50px;top:922.99px;font-size:26px;color:#000;transform:scaleX(0.8400)">29.07.1998</div>
<div id="r11_addr" class="t" style="left:1056.20px;top:922.99px;font-size:26px;color:#000;transform:scaleX(0.8400)">вул. Садова, 5</div>
<div id="r11_tel" class="t" style="left:1234.00px;top:922.99px;font-size:26px;color:#000;transform:scaleX(0.8400)">0939426195</div>
<div id="r11_card" class="t" style="left:1492.50px;top:922.99px;font-size:26px;color:#000;transform:scaleX(0.8400)">990112000004</div>
<div id="r11_iss" class="t" style="left:1684.00px;top:922.99px;font-size:26px;color:#000;transform:scaleX(0.8400)">07.07.2023</div>
<div id="r11_disc" class="t" style="right:623.00px;top:922.99px;font-size:26px;color:#000;transform:scaleX(0.8400);transform-origin:100% 0">2,00</div>
<div id="r11_city" class="t" style="left:2044.00px;top:922.99px;font-size:26px;color:#000;transform:scaleX(0.8400)">Харків</div>
<div id="r11_age" class="t" style="right:313.00px;top:922.99px;font-size:26px;color:#000;transform:scaleX(0.8400);transform-origin:100% 0">26</div>
<svg class="a" style="left:2500px;top:347px;" width="22" height="14" viewBox="0 0 22 14"><path d="M2.6 11 L10.6 3 L18.6 11" fill="none" stroke="#606060" stroke-width="3"/></svg>
<div class="a" style="left:2496px;top:372px;width:30px;height:349px;background:#bebebe;border-radius:5px"></div>
<svg class="a" style="left:2500px;top:1081px;" width="22" height="14" viewBox="0 0 22 14"><path d="M2.6 3 L10.6 11 L18.6 3" fill="none" stroke="#606060" stroke-width="3"/></svg>
<svg class="a" style="left:24px;top:1112px;" width="14" height="22" viewBox="0 0 14 22"><path d="M10.5 3.8 L3.5 10.8 L10.5 17.8" fill="none" stroke="#606060" stroke-width="3"/></svg>
<div class="a" style="left:48px;top:1107px;width:2380px;height:30px;background:#bebebe;border-radius:5px"></div>
<svg class="a" style="left:2470px;top:1112px;" width="14" height="22" viewBox="0 0 14 22"><path d="M3.5 3.8 L10.5 10.8 L3.5 17.8" fill="none" stroke="#606060" stroke-width="3"/></svg>
<div class="a" style="left:2494px;top:1105px;width:34px;height:34px;background:#bebebe"></div>
<div class="a" style="left:15px;top:1148px;width:119px;height:46px;background:#e2e3e5"></div>
<div class="a" style="left:140px;top:1148px;width:166px;height:46px;background:#e2e3e5"></div>
<div class="a" style="left:312px;top:1148px;width:140px;height:46px;background:#e2e3e5"></div>
<div class="a" style="left:458px;top:1148px;width:326px;height:46px;background:#e2e3e5"></div>
<div id="f_cnt" class="t" style="left:30.06px;top:1161.93px;font-size:23px;color:#000;font-weight:bold;transform:scaleX(1.1038)">К-сть</div>
<div id="f_12" class="t" style="left:101.30px;top:1161.73px;font-size:23px;color:#000;transform:scaleX(0.9362)">12</div>
<svg class="a" style="left:171px;top:1150px;" width="16" height="42" viewBox="0 0 16 42"><circle cx="8" cy="5.3" r="4.7" fill="#e84c3d"/>
<path d="M1 13.8 Q1 11.2 3.6 11.2 H12.4 Q15 11.2 15 13.8 V24.5 L12.6 26.5 L12 40.8 H4 L3.4 26.5 L1 24.5 Z" fill="#e84c3d"/></svg>
<div id="f_man" class="t" style="left:204.36px;top:1161.33px;font-size:23px;color:#707070;transform:scaleX(0.9412)">Чоловіча</div>
<svg class="a" style="left:327px;top:1151px;" width="41" height="42" viewBox="0 0 41 42"><g fill="none" stroke="#2b2b2b" stroke-width="2.2" stroke-linejoin="round">
<path d="M2.4 25 L24.2 3.2 L38.2 17.2 L23.7 31.7 H9.4 Z"/>
<path d="M12.4 15 L26.4 29"/></g>
<rect x="3" y="35.9" width="36" height="2.4" fill="#2b2b2b"/></svg>
<div id="f_client" class="t" style="left:373.86px;top:1161.33px;font-size:23px;color:#707070;transform:scaleX(0.9669)">Клієнт</div>
<svg class="a" style="left:488px;top:1163px;" width="17" height="17" viewBox="0 0 17 17"><circle cx="8.5" cy="8.5" r="7.8" fill="#3479f6"/></svg>
<div id="f_acc" class="t" style="left:522.15px;top:1161.33px;font-size:23px;color:#707070;transform:scaleX(0.9715)">Накопичувальна знижка</div>
</body></html>
